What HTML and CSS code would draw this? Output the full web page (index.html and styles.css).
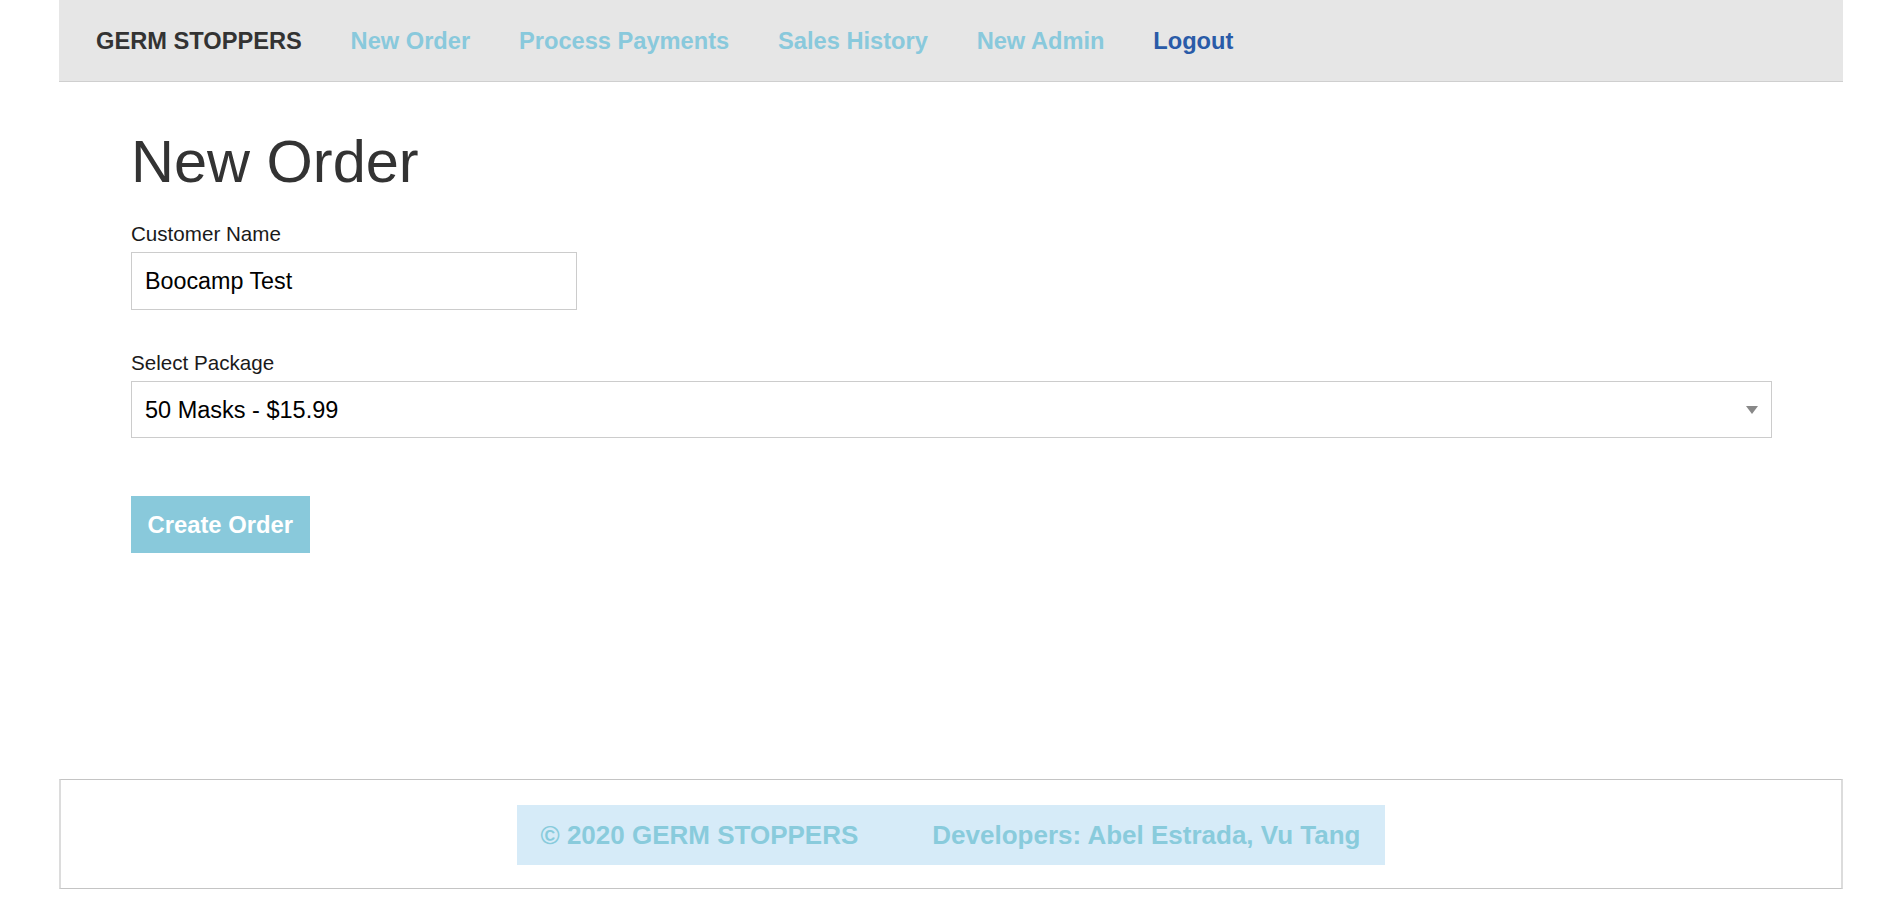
FILE: index.html
```html
<!DOCTYPE html>
<html lang="en">
<head>
<meta charset="utf-8">
<title>Germ Stoppers - New Order</title>
<link rel="stylesheet" href="styles.css">
</head>
<body>
<nav class="navbar">
  <a class="brand" href="#">GERM STOPPERS</a>
  <a class="nav-link" href="#">New Order</a>
  <a class="nav-link" href="#">Process Payments</a>
  <a class="nav-link" href="#">Sales History</a>
  <a class="nav-link" href="#">New Admin</a>
  <a class="nav-link logout" href="#">Logout</a>
</nav>
<main class="content">
  <h1 class="title">New Order</h1>
  <form class="order-form">
    <div class="group">
      <label class="label" for="cname">Customer Name</label>
      <input class="text-input" id="cname" type="text" value="Boocamp Test">
    </div>
    <div class="group group-select">
      <label class="label" for="pkg">Select Package</label>
      <div class="select-wrap">
        <select class="select" id="pkg">
          <option>50 Masks - $15.99</option>
        </select>
      </div>
    </div>
    <button class="btn" type="button">Create Order</button>
  </form>
</main>
<footer class="footer">
  <div class="footer-inner">
    <span class="footer-text">© 2020 GERM STOPPERS</span>
    <span class="footer-text">Developers: Abel Estrada, Vu Tang</span>
  </div>
</footer>
</body>
</html>
```
FILE: styles.css
```css
html, body {
  margin: 0;
  padding: 0;
}
body {
  font-family: "Liberation Sans", Arial, sans-serif;
  min-height: 100vh;
  display: flex;
  flex-direction: column;
  background: #ffffff;
  color: #212529;
}
.navbar {
  margin: 0 60px 0 59px;
  height: 82px;
  box-sizing: border-box;
  background: #e6e6e6;
  border-bottom: 1px solid #cfcfcf;
  display: flex;
  align-items: center;
  padding-left: 37px;
  gap: 48.8px;
}
.brand, .nav-link {
  font-size: 23.65px;
  font-weight: bold;
  text-decoration: none;
  line-height: 30px;
}
.brand {
  color: #333333;
}
.nav-link {
  color: #89c9dc;
}
.nav-link.logout {
  color: #2a5ba8;
}
.content {
  margin: 0 131px;
}
.title {
  margin: 44px 0 21px;
  font-size: 59.5px;
  line-height: 71px;
  font-weight: normal;
  color: #333333;
}
.order-form {
  display: flex;
  flex-direction: column;
  align-items: flex-start;
}
.group {
  display: flex;
  flex-direction: column;
  align-self: stretch;
  align-items: flex-start;
}
.group-select {
  margin-top: 37px;
}
.label {
  display: block;
  font-size: 20.6px;
  line-height: 31px;
  margin-bottom: 3px;
  color: #1a1a1a;
}
.text-input {
  width: 446px;
  height: 58px;
  box-sizing: border-box;
  border: 1px solid #cccccc;
  padding: 0 13px;
  margin: 0;
  font-family: "Liberation Sans", Arial, sans-serif;
  font-size: 23.3px;
  color: #000000;
  background: #ffffff;
  outline: none;
}
.select-wrap {
  position: relative;
  align-self: stretch;
}
.select-wrap::after {
  content: "";
  position: absolute;
  right: 14px;
  top: 25px;
  width: 0;
  height: 0;
  border-left: 6px solid transparent;
  border-right: 6px solid transparent;
  border-top: 8px solid #888888;
  pointer-events: none;
}
.select {
  display: block;
  width: 100%;
  height: 57px;
  box-sizing: border-box;
  border: 1px solid #cccccc;
  border-radius: 0;
  padding: 0 13px;
  margin: 0;
  font-family: "Liberation Sans", Arial, sans-serif;
  font-size: 23.5px;
  color: #000000;
  background: #ffffff;
  -webkit-appearance: none;
  appearance: none;
  outline: none;
}
.btn {
  margin-top: 58px;
  height: 57px;
  padding: 0 16.5px;
  border: none;
  border-radius: 0;
  background: #89c9db;
  color: #ffffff;
  font-family: "Liberation Sans", Arial, sans-serif;
  font-size: 23.8px;
  font-weight: bold;
  cursor: pointer;
}
.footer {
  margin: auto 60px 13px 59px;
  height: 110px;
  box-sizing: border-box;
  border-top: 1px solid #c4c4c4;
  border-bottom: 1px solid #c4c4c4;
  border-left: 2px solid #dcdcdc;
  border-right: 2px solid #dcdcdc;
  display: flex;
  justify-content: center;
  align-items: flex-start;
  padding-top: 25px;
}
.footer-inner {
  display: flex;
  gap: 74px;
  padding: 0 25px 0 24px;
  background: #d6ebf8;
}
.footer-text {
  color: #89cbdc;
  font-size: 26px;
  font-weight: bold;
  line-height: 60px;
  white-space: nowrap;
}
```
